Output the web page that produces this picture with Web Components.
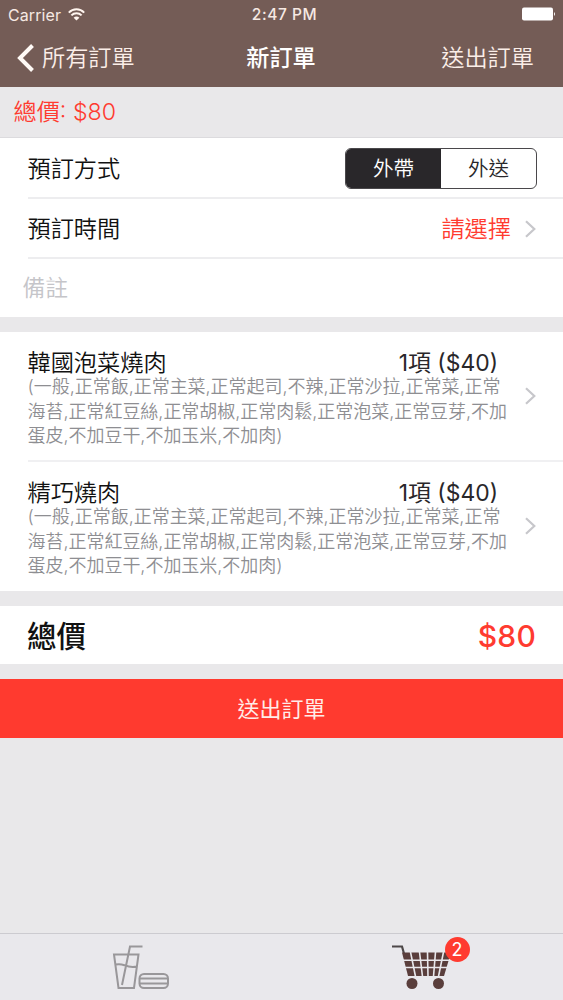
<!DOCTYPE html>
<html lang="zh-Hant">
<head>
<meta charset="utf-8">
<title>新訂單</title>
<style>
html,body{margin:0;height:100%}
body{background:#e9e8ea;color:#111;font-family:Inter,"Noto Sans CJK TC",sans-serif;overflow:hidden}
</style>
</head>
<body>
<order-app></order-app>
<script>
const define = (name, html) => customElements.define(name, class extends HTMLElement {
  constructor() {
    super();
    const t = document.createElement('template');
    t.innerHTML = html;
    this.attachShadow({mode: 'open'}).append(t.content.cloneNode(true));
  }
});

define('status-bar', `
<style>
:host{display:grid;grid-template-columns:1fr auto 1fr;align-items:center;height:28px;padding:0 7px 0 8px;color:#f6e9e3;font-size:16px;line-height:28px}
.l{display:flex;align-items:center;gap:7px;letter-spacing:.1px;height:27px}
.t{font-size:15.5px;font-weight:500;letter-spacing:.55px;padding:1px 0 0 5px}
.r{display:flex;justify-content:flex-end;height:15px}
svg{display:block}
</style>
<div class="l"><span>Carrier</span>
<svg width="17" height="13" viewBox="0 0 17 13" fill="none" stroke="#fff5ef" stroke-width="2"><path d="M.8 4.6C5.1.2 11.9.2 16.2 4.6M3.4 7.4c2.8-2.9 7.4-2.9 10.2 0"/><path d="M8.5 12.6 5.6 9.7c1.6-1.6 4.2-1.6 5.8 0z" fill="#fff5ef" stroke="none"/></svg></div>
<div class="t">2:47 PM</div>
<div class="r"><svg width="34" height="14" viewBox="0 0 34 14"><rect x="0" y=".5" width="31" height="13" rx="2" fill="#fff"/><path d="M32 5q2 2 0 4z" fill="#fff"/></svg></div>`);

define('nav-bar', `
<style>
:host{display:grid;grid-template-columns:1fr auto 1fr;align-items:center;height:59px;padding:0 29px 0 17px;color:#fbeee8;font-size:23.2px;line-height:58px}
.b{display:flex;align-items:center;gap:8px}
.t{font-weight:500;color:#fff;padding-left:11px}
.r{text-align:right;white-space:nowrap}
.b,.r{font-weight:350}
</style>
<div class="b"><svg width="17" height="28" viewBox="0 0 17 28" fill="none" stroke="#fffaf6" stroke-width="4"><path d="M15.5 1.5 3 14l12.500 12.500"/></svg><slot name="back"></slot></div>
<div class="t"><slot></slot></div>
<div class="r"><slot name="action"></slot></div>`);

define('chevron-icon', `
<style>:host{display:block;width:12px;height:18px}svg{display:block}</style>
<svg width="12" height="18" viewBox="0 0 12 18" fill="none" stroke="#c7c7cb" stroke-width="2.2"><path d="M1 1.200 9.300 9 1 16.800"/></svg>`);

define('form-row', `
<style>
:host{display:flex;height:60px;box-sizing:border-box;background:#fff;padding-left:27.5px;font-size:23.2px;font-weight:350;line-height:56px}
.in{flex:1;display:flex;align-items:center;justify-content:space-between;border-bottom:2px solid #ededef;padding:1px 26px 0 0}
:host([first]){height:61px}
:host([last]){height:58px;padding-left:22.5px;color:#c5c5c9;font-size:22.8px;line-height:56px}
:host([last]) .in{border:0;padding-top:0}
.v{display:flex;align-items:center;gap:14px;color:#ff3b30}
:host([first]) .in{padding-top:2px}
</style>
<div class="in"><slot></slot><div class="v"><slot name="value"></slot></div></div>`);

define('segment-control', `
<style>
:host{display:grid;grid-template-columns:1fr 1fr;box-sizing:border-box;width:192px;height:41px;border:1.5px solid #4a484b;border-radius:6px;overflow:hidden;font-size:20.6px;line-height:40px;text-align:center;color:#29272a;background:#fff}
.on{background:#29272a;color:#fff}
</style>
<div class="on"><slot name="a"></slot></div><div><slot name="b"></slot></div>`);

define('order-item', `
<style>
:host{display:flex;background:#fff;height:130px;box-sizing:border-box;padding-left:27.5px}
.in{flex:1;display:flex;align-items:center;padding-right:26px;border-bottom:2px solid #f0f0f2}
:host([last]){height:129px}
:host([last]) .in{border-color:#fff}
.m{flex:1;height:100%;box-sizing:border-box;padding-top:15px}
.h{display:flex;justify-content:space-between;font-size:23.2px;font-weight:350;line-height:28px;height:28px;padding-right:27px}
.h>*{position:relative;top:1.5px}
.q{color:#29272a;font-size:22.9px;font-weight:380}
.d{font-size:18px;line-height:24.5px;color:#8e8e92;font-weight:350;white-space:nowrap;letter-spacing:-.03px}
</style>
<div class="in"><div class="m"><div class="h"><span><slot name="name"></slot></span><span class="q">1項 ($40)</span></div>
<div class="d">(一般,正常飯,正常主菜,正常起司,不辣,正常沙拉,正常菜,正常<br>海苔,正常紅豆絲,正常胡椒,正常肉鬆,正常泡菜,正常豆芽,不加<br>蛋皮,不加豆干,不加玉米,不加肉)</div></div>
<chevron-icon></chevron-icon></div>`);

define('total-row', `
<style>
:host{display:flex;justify-content:space-between;align-items:center;background:#fff;height:58px;padding:0 27px;font-size:29.5px;font-weight:500;line-height:58px}
.p{color:#ff3b30;font-size:30px;letter-spacing:.2px}
.p,.n{padding-top:2px}
</style>
<span class="n"><slot></slot></span><span class="p"><slot name="price"></slot></span>`);

define('submit-button', `
<style>:host{display:block;background:#ff3a2f;color:#ffece8;height:59px;font-size:22px;line-height:60px;text-align:center}</style><slot></slot>`);

define('tab-bar', `
<style>
:host{display:grid;grid-template-columns:1fr 1fr;height:66px;border-top:1.5px solid #cccbd0;background:#e9e8ec}
div{display:flex;justify-content:center}
.cart{position:relative}
.badge{position:absolute;left:163px;top:3px;width:25px;height:25px;border-radius:50%;background:#ff3b30;color:#fff;font-size:18px;line-height:25px;text-align:center}
</style>
<div><svg width="100" height="65" viewBox="91 934 100 65" fill="none" stroke="#99979a" stroke-width="2"><path d="M114 954.500h24.500l-4.500 33.500h-15.500zM142.500 946.500h-12.500L122 985M115.500 964.500q4.500-1 9 .7 6.500 2.800 12.500 1.300"/><rect x="139.500" y="974" width="28.500" height="14" rx="4.500"/><path d="M140 978.500h27.500M140 983.500h27.500"/></svg></div>
<div class="cart"><svg width="100" height="65" viewBox="372 934 100 65"><path d="M392 946.500h10l2 7" fill="none" stroke="#4d4748" stroke-width="2.200"/><path d="M402 952.500h49l-7 23.500h-36z" fill="#5a3e3c"/><path d="M401 960.300h50M402 967.500h48M410.500 952l5 24.500M419.500 952l3 24.500M427.500 952l.5 24.500M435.500 952l-2 24.500M443.500 952l-5 24.500" fill="none" stroke="#e9e8ec" stroke-width="1.600"/><circle cx="412" cy="983.500" r="5.500" fill="#5a3e3c"/><circle cx="438.500" cy="983.500" r="5.500" fill="#5a3e3c"/></svg><span class="badge">2</span></div>`);

define('order-app', `
<style>
:host{display:flex;flex-direction:column;height:1000px;width:563px}
header{background:#745c56;height:87px}
.sub{height:51px;box-sizing:border-box;border-bottom:1px solid #dcdbde;padding-left:13.5px;color:#ff3b30;font-size:23.200px;font-weight:350;line-height:50px}
.gap{display:flex;flex-direction:column;gap:15px}
.spacer{flex:1}
section{display:flow-root}
</style>
<header><status-bar></status-bar><nav-bar><span slot="back">所有訂單</span>新訂單<span slot="action">送出訂單</span></nav-bar></header>
<div class="sub">總價: $80</div>
<div class="gap">
<section>
<form-row first>預訂方式<segment-control slot="value"><span slot="a">外帶</span><span slot="b">外送</span></segment-control></form-row>
<form-row>預訂時間<span slot="value">請選擇</span><chevron-icon slot="value"></chevron-icon></form-row>
<form-row last>備註</form-row>
</section>
<section><order-item><span slot="name">韓國泡菜燒肉</span></order-item><order-item last><span slot="name">精巧燒肉</span></order-item></section>
<total-row>總價<span slot="price">$80</span></total-row>
<submit-button>送出訂單</submit-button>
</div>
<div class="spacer"></div>
<tab-bar></tab-bar>`);
</script>
</body>
</html>
